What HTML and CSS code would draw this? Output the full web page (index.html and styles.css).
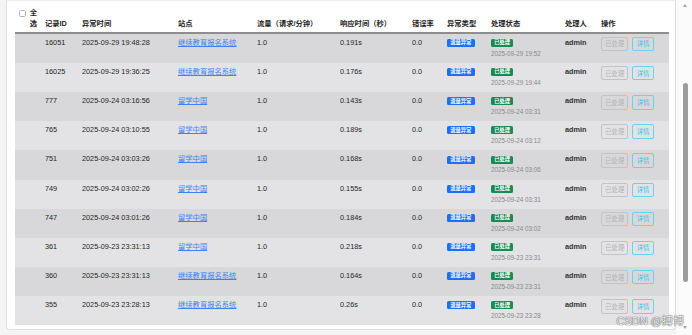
FILE: index.html
```html
<!DOCTYPE html>
<html lang="zh-CN">
<head>
  <meta charset="UTF-8">
  <meta name="viewport" content="width=device-width, initial-scale=1.0">
  <title>异常记录</title>
  <link rel="stylesheet" href="styles.css">
</head>
<body>

<div class="page">
  <div class="card">
    <table class="log-table">
      <colgroup>
        <col style="width:26px"><col style="width:37px"><col style="width:96px"><col style="width:79px">
        <col style="width:83px"><col style="width:72px"><col style="width:35px"><col style="width:44px">
        <col style="width:74px"><col style="width:36px"><col style="width:72px">
      </colgroup>
      <thead>
        <tr>
          <th><div class="select-all"><span class="check"></span><span>全<br>选</span></div></th>
          <th>记录ID</th>
          <th>异常时间</th>
          <th>站点</th>
          <th>流量（请求/分钟）</th>
          <th>响应时间（秒）</th>
          <th>错误率</th>
          <th>异常类型</th>
          <th>处理状态</th>
          <th>处理人</th>
          <th>操作</th>
        </tr>
      </thead>
      <tbody>
        <tr>
          <td></td><td>16051</td><td>2025-09-29 19:48:28</td>
          <td><a href="#">继续教育报名系统</a></td>
          <td>1.0</td><td>0.191s</td><td>0.0</td>
          <td><span class="badge blue">流量异常</span></td>
          <td><div class="line"><span class="badge green">已处理</span></div><div class="time">2025-09-29 19:52</div></td>
          <td class="user">admin</td>
          <td class="ops-cell"><div class="ops"><button class="btn-done" disabled>已处理</button><button class="btn-info">详情</button></div></td>
        </tr>
        <tr>
          <td></td><td>16025</td><td>2025-09-29 19:36:25</td>
          <td><a href="#">继续教育报名系统</a></td>
          <td>1.0</td><td>0.176s</td><td>0.0</td>
          <td><span class="badge blue">流量异常</span></td>
          <td><div class="line"><span class="badge green">已处理</span></div><div class="time">2025-09-29 19:44</div></td>
          <td class="user">admin</td>
          <td class="ops-cell"><div class="ops"><button class="btn-done" disabled>已处理</button><button class="btn-info">详情</button></div></td>
        </tr>
        <tr>
          <td></td><td>777</td><td>2025-09-24 03:16:56</td>
          <td><a href="#">留学中国</a></td>
          <td>1.0</td><td>0.143s</td><td>0.0</td>
          <td><span class="badge blue">流量异常</span></td>
          <td><div class="line"><span class="badge green">已处理</span></div><div class="time">2025-09-24 03:31</div></td>
          <td class="user">admin</td>
          <td class="ops-cell"><div class="ops"><button class="btn-done" disabled>已处理</button><button class="btn-info">详情</button></div></td>
        </tr>
        <tr>
          <td></td><td>765</td><td>2025-09-24 03:10:55</td>
          <td><a href="#">留学中国</a></td>
          <td>1.0</td><td>0.189s</td><td>0.0</td>
          <td><span class="badge blue">流量异常</span></td>
          <td><div class="line"><span class="badge green">已处理</span></div><div class="time">2025-09-24 03:12</div></td>
          <td class="user">admin</td>
          <td class="ops-cell"><div class="ops"><button class="btn-done" disabled>已处理</button><button class="btn-info">详情</button></div></td>
        </tr>
        <tr>
          <td></td><td>751</td><td>2025-09-24 03:03:26</td>
          <td><a href="#">留学中国</a></td>
          <td>1.0</td><td>0.168s</td><td>0.0</td>
          <td><span class="badge blue">流量异常</span></td>
          <td><div class="line"><span class="badge green">已处理</span></div><div class="time">2025-09-24 03:06</div></td>
          <td class="user">admin</td>
          <td class="ops-cell"><div class="ops"><button class="btn-done" disabled>已处理</button><button class="btn-info">详情</button></div></td>
        </tr>
        <tr>
          <td></td><td>749</td><td>2025-09-24 03:02:26</td>
          <td><a href="#">留学中国</a></td>
          <td>1.0</td><td>0.155s</td><td>0.0</td>
          <td><span class="badge blue">流量异常</span></td>
          <td><div class="line"><span class="badge green">已处理</span></div><div class="time">2025-09-24 03:31</div></td>
          <td class="user">admin</td>
          <td class="ops-cell"><div class="ops"><button class="btn-done" disabled>已处理</button><button class="btn-info">详情</button></div></td>
        </tr>
        <tr>
          <td></td><td>747</td><td>2025-09-24 03:01:26</td>
          <td><a href="#">留学中国</a></td>
          <td>1.0</td><td>0.184s</td><td>0.0</td>
          <td><span class="badge blue">流量异常</span></td>
          <td><div class="line"><span class="badge green">已处理</span></div><div class="time">2025-09-24 03:02</div></td>
          <td class="user">admin</td>
          <td class="ops-cell"><div class="ops"><button class="btn-done" disabled>已处理</button><button class="btn-info">详情</button></div></td>
        </tr>
        <tr>
          <td></td><td>361</td><td>2025-09-23 23:31:13</td>
          <td><a href="#">留学中国</a></td>
          <td>1.0</td><td>0.218s</td><td>0.0</td>
          <td><span class="badge blue">流量异常</span></td>
          <td><div class="line"><span class="badge green">已处理</span></div><div class="time">2025-09-23 23:31</div></td>
          <td class="user">admin</td>
          <td class="ops-cell"><div class="ops"><button class="btn-done" disabled>已处理</button><button class="btn-info">详情</button></div></td>
        </tr>
        <tr>
          <td></td><td>360</td><td>2025-09-23 23:31:13</td>
          <td><a href="#">继续教育报名系统</a></td>
          <td>1.0</td><td>0.164s</td><td>0.0</td>
          <td><span class="badge blue">流量异常</span></td>
          <td><div class="line"><span class="badge green">已处理</span></div><div class="time">2025-09-23 23:31</div></td>
          <td class="user">admin</td>
          <td class="ops-cell"><div class="ops"><button class="btn-done" disabled>已处理</button><button class="btn-info">详情</button></div></td>
        </tr>
        <tr>
          <td></td><td>355</td><td>2025-09-23 23:28:13</td>
          <td><a href="#">继续教育报名系统</a></td>
          <td>1.0</td><td>0.26s</td><td>0.0</td>
          <td><span class="badge blue">流量异常</span></td>
          <td><div class="line"><span class="badge green">已处理</span></div><div class="time">2025-09-23 23:28</div></td>
          <td class="user">admin</td>
          <td class="ops-cell"><div class="ops"><button class="btn-done" disabled>已处理</button><button class="btn-info">详情</button></div></td>
        </tr>
      </tbody>
    </table>
  </div>
</div>

<!-- fake page scrollbar -->
<div class="scrollbar">
  <span class="arrow-up"></span>
  <span class="thumb"></span>
  <span class="arrow-down"></span>
</div>

<div class="watermark">CSDN @搏博</div>

</body>
</html>
```

FILE: styles.css
```css
/* Basic layout */
* {
  box-sizing: border-box;
}
html, body {
  margin: 0;
  padding: 0;
}
body {
  font-family: "Liberation Sans", "Noto Sans CJK SC", sans-serif;
  font-size: 7.3px;
  line-height: 1.5;
  color: #262626;
  background-color: #f4f4f5;
  height: 335px;
  overflow: hidden;
  display: flex;
  position: relative;
}
.page {
  flex: 1;
  padding-left: 6px;
}
.card {
  background-color: #fff;
  border: 1px solid #dedede;
  border-top-color: #ededed;
  border-radius: 0 0 4px 4px;
  padding: 2px 6px 4px 8px;
}

/* Table */
.log-table {
  width: 654px;
  border-collapse: collapse;
  table-layout: fixed;
}
.log-table th {
  font-weight: bold;
  color: #1e1e1e;
  text-align: left;
  vertical-align: bottom;
  padding: 5px 4px 2px;
  border-bottom: 2px solid #8e8e8e;
  white-space: nowrap;
}
.log-table td {
  padding: 4px;
  vertical-align: top;
  white-space: nowrap;
}
.log-table tbody tr:nth-child(odd) { background-color: #d8d8da; }
.log-table tbody tr:nth-child(even) { background-color: #e3e3e5; }

.select-all {
  display: flex;
  align-items: flex-start;
  gap: 4px;
}
.check {
  width: 7px;
  height: 7px;
  margin-top: 1.5px;
  border: 1px solid #b4b4b4;
  border-radius: 1.5px;
  background-color: #fff;
}
.log-table a {
  color: #3d82f0;
  text-decoration: underline;
}
.user {
  font-weight: bold;
  color: #333;
}

/* Badges */
.badge {
  display: inline-block;
  font-size: 5.3px;
  line-height: 1;
  padding: 1.35px 3.2px;
  border-radius: 1.5px;
  color: #fff;
  font-weight: bold;
  vertical-align: middle;
}
.blue { background-color: #1a6ff5; }
.green { background-color: #1a8a55; }
.time {
  font-size: 6.3px;
  line-height: 10.2px;
  color: #8a8a8a;
}

/* Buttons */
.ops-cell {
  padding-top: 3px !important;
}
.ops {
  display: flex;
  gap: 4px;
}
.ops button {
  font-family: inherit;
  font-size: 6.3px;
  line-height: 9.4px;
  padding: 1.5px 3.3px;
  border-radius: 2px;
  background: transparent;
  cursor: pointer;
}
.btn-done {
  border: 1px solid #c4c4c6;
  color: #b3b3b5;
}
.btn-info {
  border: 1px solid #6ad2eb;
  color: #38c2e4;
}

/* Scrollbar */
.scrollbar {
  width: 16px;
  background-color: #fbfbfb;
  display: flex;
  flex-direction: column;
  align-items: center;
  padding-left: 2px;
}
.arrow-up {
  margin-top: 4px;
  border-left: 2.5px solid transparent;
  border-right: 2.5px solid transparent;
  border-bottom: 3px solid #a3a3a3;
}
.thumb {
  margin-top: 76px;
  width: 5px;
  height: 199px;
  border-radius: 3px;
  background-color: #9c9c9c;
}
.arrow-down {
  margin-top: auto;
  margin-bottom: 6px;
  border-left: 2.5px solid transparent;
  border-right: 2.5px solid transparent;
  border-top: 3px solid #a3a3a3;
}

/* Watermark */
.watermark {
  position: absolute;
  right: 8px;
  bottom: 7px;
  font-size: 11px;
  line-height: 13px;
  color: rgba(255, 255, 255, 0.92);
  text-shadow: 0 0 1px #555, 0 0 1px #555;
}
```
